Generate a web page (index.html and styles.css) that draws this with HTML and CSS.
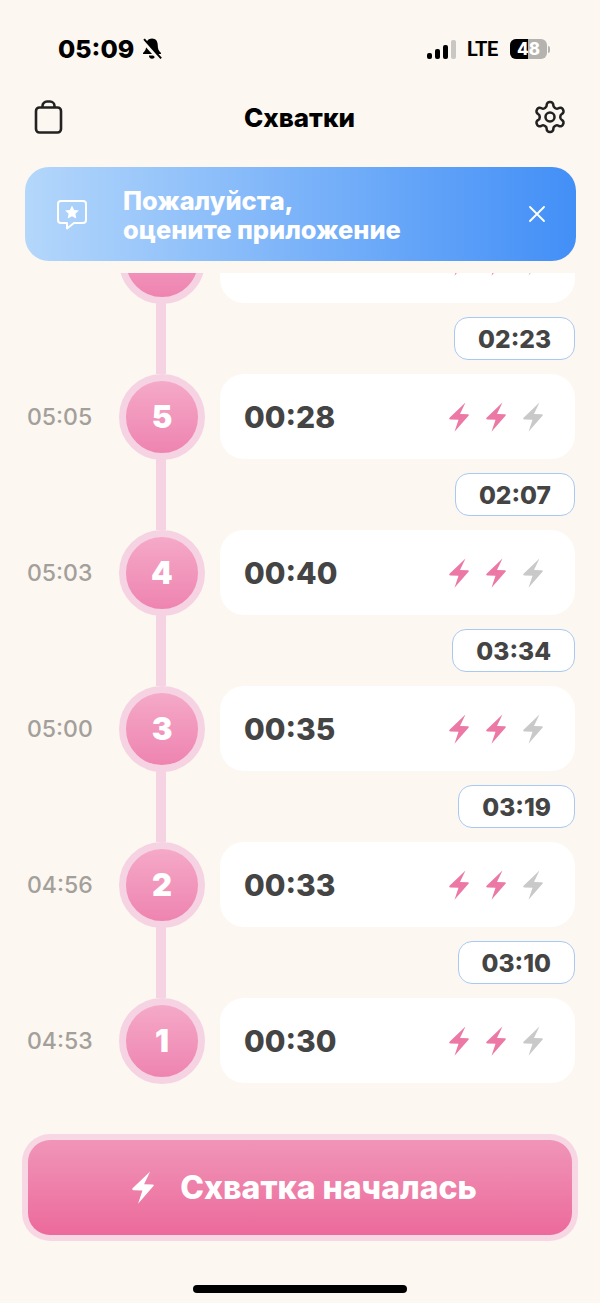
FILE: index.html
```html
<!DOCTYPE html>
<html lang="ru">

<head>
    <meta charset="UTF-8">
    <meta name="viewport" content="width=device-width, initial-scale=1.0">
    <title>Схватки</title>
    <link rel="stylesheet" href="styles.css">
</head>

<body>
    <svg class="defs" width="0" height="0">
        <symbol id="bolt" viewBox="0 0 20 30">
            <path d="M16.500 0.500 L0.300 16 Q0 17.500 1.500 17.600 L9.500 17.800 L5.500 29.700 L19.700 13.500 Q20.200 12.300 18.800 12.200 L11 12 Z" />
        </symbol>
    </svg>

    <div class="phone">
        <div class="status-bar">
            <div class="status-left">
                <span class="clock">05:09</span>
                <svg class="bell" width="22" height="22" viewBox="0 0 20 20">
                    <path d="M10 .5c-3.400 0-5.200 2.600-5.200 5.800 0 3.600-.9 5.400-2.800 7-.5.5-.2 1.200.5 1.200h15c.7 0 1-.7.5-1.200-1.900-1.600-2.800-3.400-2.800-7 0-3.200-1.800-5.800-5.200-5.800z" fill="#000" />
                    <path d="M7.200 16a2.800 2.800 0 0 0 5.600 0z" fill="#000" />
                    <path d="M1.500 2.500l15 16.500" stroke="#fcf7f0" stroke-width="3.600" />
                    <path d="M2.800 1l15.500 17.500" stroke="#000" stroke-width="1.800" />
                </svg>
            </div>
            <div class="status-right">
                <div class="signal">
                    <span class="sig-bar sig-1"></span>
                    <span class="sig-bar sig-2"></span>
                    <span class="sig-bar sig-3"></span>
                    <span class="sig-bar sig-4"></span>
                </div>
                <span class="lte">LTE</span>
                <div class="battery">
                    <div class="battery-body">
                        <div class="battery-fill"></div>
                        <span class="battery-num">48</span>
                    </div>
                    <span class="battery-tip"></span>
                </div>
            </div>
        </div>

        <div class="nav">
            <svg class="nav-icon" width="36" height="36" viewBox="0 0 36 36" fill="none" stroke="#222" stroke-width="2.600" stroke-linejoin="round">
                <rect x="5" y="8.500" width="25" height="25" rx="3.500" />
                <path d="M11.500 8.500V7a4.500 4.500 0 0 1 4.500-4.500h3a4.500 4.500 0 0 1 4.500 4.500v1.500" />
            </svg>
            <h1 class="title">Схватки</h1>
            <svg class="nav-icon" width="36" height="36" viewBox="0 0 24 24" fill="none" stroke="#222" stroke-width="1.700" stroke-linecap="round" stroke-linejoin="round">
                <path d="M12.220 2h-.44a2 2 0 0 0-2 2v.18a2 2 0 0 1-1 1.730l-.43.25a2 2 0 0 1-2 0l-.15-.08a2 2 0 0 0-2.730.73l-.22.38a2 2 0 0 0 .73 2.730l.15.1a2 2 0 0 1 1 1.720v.51a2 2 0 0 1-1 1.740l-.15.09a2 2 0 0 0-.73 2.730l.22.38a2 2 0 0 0 2.730.73l.15-.08a2 2 0 0 1 2 0l.43.25a2 2 0 0 1 1 1.730V20a2 2 0 0 0 2 2h.44a2 2 0 0 0 2-2v-.18a2 2 0 0 1 1-1.730l.43-.25a2 2 0 0 1 2 0l.15.08a2 2 0 0 0 2.730-.73l.22-.39a2 2 0 0 0-.73-2.730l-.15-.08a2 2 0 0 1-1-1.740v-.5a2 2 0 0 1 1-1.740l.15-.09a2 2 0 0 0 .73-2.730l-.22-.38a2 2 0 0 0-2.730-.73l-.15.08a2 2 0 0 1-2 0l-.43-.25a2 2 0 0 1-1-1.730V4a2 2 0 0 0-2-2z" />
                <circle cx="12" cy="12" r="3" />
            </svg>
        </div>

        <div class="banner">
            <svg class="banner-icon" width="32" height="32" viewBox="0 0 32 32">
                <path d="M5 3h22a3 3 0 0 1 3 3v16a3 3 0 0 1-3 3H18l-7 5.500V25H5a3 3 0 0 1-3-3V6a3 3 0 0 1 3-3z" fill="none" stroke="#fff" stroke-width="2" stroke-linejoin="round" />
                <path d="M16 7.500l2.100 4.400 4.800.6-3.500 3.300.9 4.800-4.300-2.400-4.300 2.400.9-4.800-3.500-3.300 4.800-.6z" fill="#fff" />
            </svg>
            <div class="banner-text">Пожалуйста,<br>оцените приложение</div>
            <svg class="banner-close" width="16" height="16" viewBox="0 0 16 16" fill="none" stroke="#fff" stroke-width="1.800" stroke-linecap="round">
                <path d="M1 1l14 14M15 1L1 15" />
            </svg>
        </div>

        <div class="list">
            <div class="row row-clipped">
                <div class="time"></div>
                <div class="dot"></div>
                <div class="card">
                    <div class="bolts">
                        <svg class="bolt"><use href="#bolt" /></svg>
                        <svg class="bolt"><use href="#bolt" /></svg>
                        <svg class="bolt off"><use href="#bolt" /></svg>
                    </div>
                </div>
            </div>
            <div class="gap">
                <div class="line"></div>
                <div class="chip">02:23</div>
            </div>

            <div class="row">
                <div class="time">05:05</div>
                <div class="dot">5</div>
                <div class="card">
                    <span class="duration">00:28</span>
                    <div class="bolts">
                        <svg class="bolt"><use href="#bolt" /></svg>
                        <svg class="bolt"><use href="#bolt" /></svg>
                        <svg class="bolt off"><use href="#bolt" /></svg>
                    </div>
                </div>
            </div>
            <div class="gap">
                <div class="line"></div>
                <div class="chip">02:07</div>
            </div>

            <div class="row">
                <div class="time">05:03</div>
                <div class="dot">4</div>
                <div class="card">
                    <span class="duration">00:40</span>
                    <div class="bolts">
                        <svg class="bolt"><use href="#bolt" /></svg>
                        <svg class="bolt"><use href="#bolt" /></svg>
                        <svg class="bolt off"><use href="#bolt" /></svg>
                    </div>
                </div>
            </div>
            <div class="gap">
                <div class="line"></div>
                <div class="chip">03:34</div>
            </div>

            <div class="row">
                <div class="time">05:00</div>
                <div class="dot">3</div>
                <div class="card">
                    <span class="duration">00:35</span>
                    <div class="bolts">
                        <svg class="bolt"><use href="#bolt" /></svg>
                        <svg class="bolt"><use href="#bolt" /></svg>
                        <svg class="bolt off"><use href="#bolt" /></svg>
                    </div>
                </div>
            </div>
            <div class="gap">
                <div class="line"></div>
                <div class="chip">03:19</div>
            </div>

            <div class="row">
                <div class="time">04:56</div>
                <div class="dot">2</div>
                <div class="card">
                    <span class="duration">00:33</span>
                    <div class="bolts">
                        <svg class="bolt"><use href="#bolt" /></svg>
                        <svg class="bolt"><use href="#bolt" /></svg>
                        <svg class="bolt off"><use href="#bolt" /></svg>
                    </div>
                </div>
            </div>
            <div class="gap">
                <div class="line"></div>
                <div class="chip">03:10</div>
            </div>

            <div class="row">
                <div class="time">04:53</div>
                <div class="dot">1</div>
                <div class="card">
                    <span class="duration">00:30</span>
                    <div class="bolts">
                        <svg class="bolt"><use href="#bolt" /></svg>
                        <svg class="bolt"><use href="#bolt" /></svg>
                        <svg class="bolt off"><use href="#bolt" /></svg>
                    </div>
                </div>
            </div>
        </div>

        <div class="footer">
            <div class="start-ring">
                <div class="start-btn">
                    <svg class="start-bolt"><use href="#bolt" /></svg>
                    <span>Схватка началась</span>
                </div>
            </div>
            <div class="home-bar"></div>
        </div>
    </div>
</body>

</html>
```

FILE: styles.css
```css
* {
    box-sizing: border-box;
    margin: 0;
    padding: 0;
    font-family: 'Inter', sans-serif;
}

body {
    background: #fcf7f0;
}

.defs {
    display: block;
    height: 0;
}

.phone {
    width: 600px;
    height: 1303px;
    overflow: hidden;
    background: #fcf7f0;

    display: flex;
    flex-direction: column;
}

.status-bar {
    height: 97px;
    padding: 33px 50px 0 58px;

    display: flex;
    align-items: flex-start;
    justify-content: space-between;
}

.status-left {
    height: 32px;

    display: flex;
    align-items: center;
    gap: 7px;
}

.clock {
    font-size: 25px;
    font-weight: 800;
    color: #000;
}

.status-right {
    height: 32px;

    display: flex;
    align-items: center;
}

.signal {
    display: flex;
    align-items: flex-end;
    gap: 3px;
    height: 19px;
}

.sig-bar {
    width: 5px;
    border-radius: 2px;
    background: #000;
}

.sig-1 { height: 6px; }
.sig-2 { height: 10px; }
.sig-3 { height: 14px; }
.sig-4 { height: 19px; background: #c9c7c3; }

.lte {
    width: 43px;
    margin-left: 11px;
    font-family: 'Roboto', sans-serif;
    font-size: 20px;
    font-weight: 700;
    letter-spacing: -0.5px;
    color: #000;
}

.battery {
    display: flex;
    align-items: center;
}

.battery-body {
    width: 37px;
    height: 20px;
    border-radius: 6px;
    overflow: hidden;
    background: #b5b3af;
    position: relative;

    display: flex;
    align-items: center;
    justify-content: center;
}

.battery-fill {
    position: absolute;
    left: 0;
    top: 0;
    bottom: 0;
    width: 48%;
    background: #000;
}

.battery-num {
    position: relative;
    font-size: 17px;
    font-weight: 800;
    color: #fff;
}

.battery-tip {
    width: 2px;
    height: 7px;
    margin-left: 1px;
    border-radius: 0 2px 2px 0;
    background: #b5b3af;
}

.nav {
    height: 40px;
    padding: 0 32px 0 31px;

    display: flex;
    align-items: center;
    justify-content: space-between;
}

.title {
    font-size: 26px;
    font-weight: 800;
    color: #000;
}

.banner {
    height: 94px;
    margin: 30px 24px 0 25px;
    padding: 0 31px 0 31px;
    border-radius: 24px;
    background: linear-gradient(90deg, #b4d7fb 0%, #428ff7 100%);

    display: flex;
    align-items: center;
}

.banner-text {
    flex: 1;
    margin-left: 35px;
    padding-top: 1px;
    font-size: 25.4px;
    line-height: 29px;
    font-weight: 800;
    color: #fff;
}

.list {
    height: 827px;
    margin-top: 12px;
    padding: 0 25px 0 27px;
    overflow: hidden;

    display: flex;
    flex-direction: column;
}

.row {
    height: 85px;
    flex-shrink: 0;

    display: flex;
    align-items: center;
}

.row-clipped {
    margin-top: -55px;
}

.time {
    width: 92px;
    font-size: 23px;
    font-weight: 500;
    color: #a3a09b;
}

.dot {
    width: 86px;
    height: 86px;
    flex-shrink: 0;
    border: 7px solid #f6d3e3;
    border-radius: 50%;
    background: linear-gradient(180deg, #f5a9c8 0%, #ee84b0 100%);
    font-size: 31px;
    font-weight: 900;
    color: #fff;

    display: flex;
    align-items: center;
    justify-content: center;
}

.card {
    flex: 1;
    height: 85px;
    margin-left: 15px;
    padding: 0 32px 0 24px;
    border-radius: 24px;
    background: #fff;

    display: flex;
    align-items: center;
}

.duration {
    font-size: 30px;
    font-weight: 800;
    color: #444;
}

.bolts {
    margin-left: auto;

    display: flex;
    gap: 17px;
}

.bolt {
    width: 20px;
    height: 30px;
    fill: #ec78a6;
}

.bolt.off {
    fill: #c9c9c9;
}

.gap {
    height: 71px;
    flex-shrink: 0;
    padding-top: 14px;

    display: flex;
    align-items: flex-start;
}

.line {
    width: 10px;
    height: 71px;
    margin-top: -14px;
    margin-left: 129px;
    background: #f6d3e3;
}

.chip {
    height: 43px;
    margin-left: auto;
    padding: 0 23px;
    border: 1.500px solid #a8c9f1;
    border-radius: 14px;
    background: #fff;
    font-size: 24.500px;
    font-weight: 800;
    color: #444;

    display: flex;
    align-items: center;
}

.footer {
    padding-top: 34px;

    display: flex;
    flex-direction: column;
    align-items: center;
}

.start-ring {
    width: 556px;
    height: 107px;
    padding: 6px;
    border-radius: 28px;
    background: #f8d7e5;
}

.start-btn {
    height: 95px;
    padding-left: 9px;
    border-radius: 22px;
    background: linear-gradient(180deg, #f095b8 0%, #ec6a9b 100%);
    font-size: 32px;
    font-weight: 800;
    color: #fff;

    display: flex;
    align-items: center;
    justify-content: center;
    gap: 26px;
}

.start-bolt {
    width: 22px;
    height: 33px;
    fill: #fff;
}

.home-bar {
    width: 214px;
    height: 8px;
    margin-top: 44px;
    border-radius: 4px;
    background: #000;
}
```
